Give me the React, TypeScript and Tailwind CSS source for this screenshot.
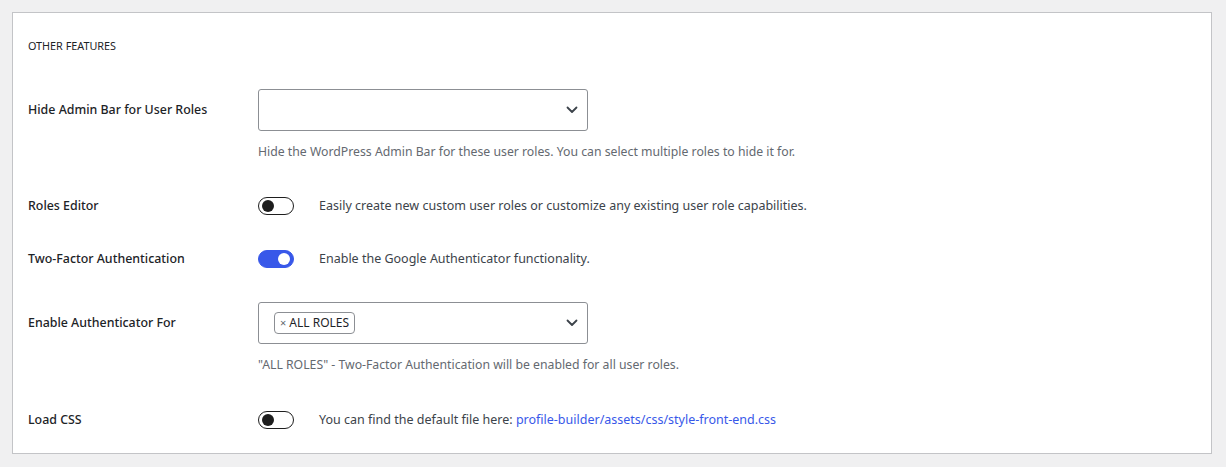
import React from 'react'

const font = { fontFamily: '"Noto Sans", "Open Sans", sans-serif' }

function Chevron() {
  return (
    <svg width="12" height="8" viewBox="0 0 12 8" className="text-[#3c434a]">
      <path d="M1.5 1.5 L6 6 L10.5 1.5" fill="none" stroke="currentColor" strokeWidth="1.8" strokeLinecap="round" strokeLinejoin="round" />
    </svg>
  )
}

function Toggle({ on }: { on?: boolean }) {
  if (on) {
    return (
      <div className="w-[36px] h-[18px] rounded-full bg-[#3858e9] border border-[#3858e9] flex items-center justify-end pr-[3px] shrink-0">
        <div className="w-[12px] h-[12px] rounded-full bg-white" />
      </div>
    )
  }
  return (
    <div className="w-[36px] h-[18px] rounded-full bg-white border-[1.5px] border-[#1e1e1e] flex items-center pl-[2.5px] shrink-0">
      <div className="w-[12px] h-[12px] rounded-full bg-[#1e1e1e]" />
    </div>
  )
}

function Label({ children }: { children: React.ReactNode }) {
  return <div className="w-[230px] shrink-0 text-[12.4px] text-[#1d2327] font-medium">{children}</div>
}

function Select({ children }: { children?: React.ReactNode }) {
  return (
    <div className="w-[330px] h-[42px] border border-[#8c8f94] rounded-[3px] bg-white flex items-center pl-[15px] pr-[9px]">
      <div className="flex-1 flex items-center">{children}</div>
      <Chevron />
    </div>
  )
}

export default function App() {
  return (
    <div className="min-h-[467px] bg-[#f0f0f1] pt-[12px] pl-[12px]" style={font}>
      <div className="w-[1200px] h-[442px] bg-white border border-[#c3c4c7] pl-[15px] pt-[25px]">
        <div className="text-[10.8px] leading-[16px] text-[#1d2327] uppercase">Other Features</div>

        <div className="mt-[35px] flex items-center">
          <Label>Hide Admin Bar for User Roles</Label>
          <Select />
        </div>
        <div className="ml-[230px] mt-[11px] text-[12.25px] leading-[20px] text-[#646970]">
          Hide the WordPress Admin Bar for these user roles. You can select multiple roles to hide it for.
        </div>

        <div className="mt-[34px] h-[20px] flex items-center">
          <Label>Roles Editor</Label>
          <Toggle />
          <span className="ml-[25px] text-[12.5px] text-[#3c434a]">
            Easily create new custom user roles or customize any existing user role capabilities.
          </span>
        </div>

        <div className="mt-[33px] h-[20px] flex items-center">
          <Label>Two-Factor Authentication</Label>
          <Toggle on />
          <span className="ml-[25px] text-[12.5px] text-[#3c434a]">Enable the Google Authenticator functionality.</span>
        </div>

        <div className="mt-[33px] flex items-center">
          <Label>Enable Authenticator For</Label>
          <Select>
            <span className="h-[22px] border border-[#8c8f94] rounded-[4px] px-[5px] flex items-center text-[12px] text-[#1d2327]">
              <span className="text-[#646970] mr-[3px] text-[11px]">×</span>ALL ROLES
            </span>
          </Select>
        </div>
        <div className="ml-[230px] mt-[11px] text-[12.25px] leading-[20px] text-[#646970]">
          "ALL ROLES" - Two-Factor Authentication will be enabled for all user roles.
        </div>

        <div className="mt-[35px] h-[20px] flex items-center">
          <Label>Load CSS</Label>
          <Toggle />
          <span className="ml-[25px] text-[12.5px] text-[#3c434a]">
            You can find the default file here:{' '}
            <a className="text-[#3858e9]">profile-builder/assets/css/style-front-end.css</a>
          </span>
        </div>
      </div>
    </div>
  )
}
